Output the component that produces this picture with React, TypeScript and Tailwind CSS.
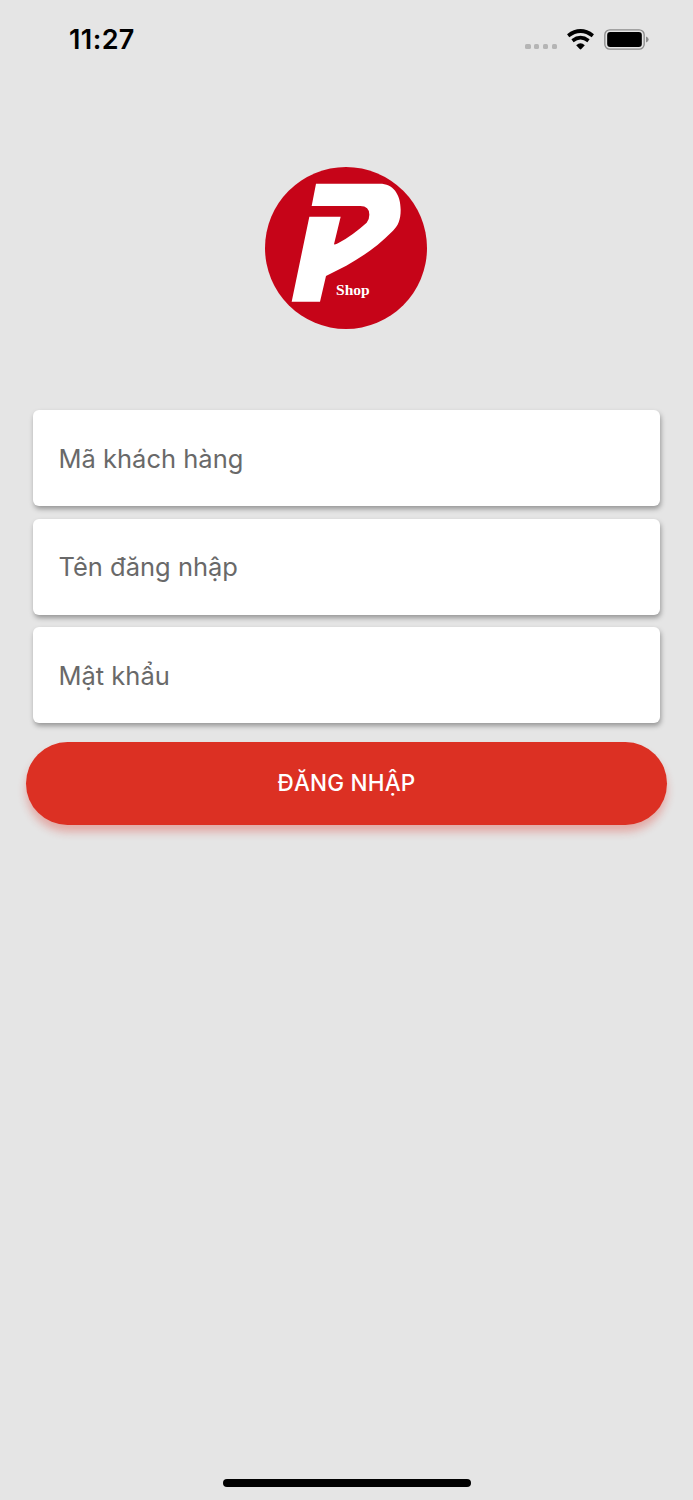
import React from "react";

interface FieldProps {
  placeholder: string;
  type?: string;
}

const StatusBar = () => {
  return (
    <div className="flex h-[80px] items-center justify-between pl-[69px] pr-[44px]">
      <span className="text-[27px] font-semibold leading-[30px] tracking-[0.4px] text-black">
        11:27
      </span>
      <div className="flex items-center">
        <div className="mt-[13px] flex gap-[3.4px]">
          <span className="size-[5.4px] rounded-[1.6px] bg-[#b5b5b5]" />
          <span className="size-[5.4px] rounded-[1.6px] bg-[#b5b5b5]" />
          <span className="size-[5.4px] rounded-[1.6px] bg-[#b5b5b5]" />
          <span className="size-[5.4px] rounded-[1.6px] bg-[#b5b5b5]" />
        </div>
        <svg className="mb-px ml-[10px] h-[21px] w-[27px]" viewBox="0 0 81 63" fill="none">
          <path d="M3.5 20Q40.5 -8 77.5 20" stroke="#000" strokeWidth="11" />
          <path d="M16.5 35Q40.5 17 64.5 35" stroke="#000" strokeWidth="11" />
          <path d="M27.5 48.5Q40.5 37 53.5 48.5L43 60Q40.5 62.5 38 60Z" fill="#000" />
        </svg>
        <svg className="mb-px ml-[10px] h-[21px] w-[45px]" viewBox="0 0 135 63" fill="none">
          <rect x="2.5" y="2.5" width="118" height="58" rx="15" stroke="#8c8c8c" strokeWidth="4" />
          <rect x="9.5" y="9" width="104" height="45" rx="9" fill="#000" />
          <path d="M126 22.5Q134 25 134 31.5T126 40.5Z" fill="#8c8c8c" />
        </svg>
      </div>
    </div>
  );
};

const Logo = () => {
  return (
    <svg className="size-[162px]" viewBox="28 27 486 486">
      <circle cx="271" cy="270" r="243" fill="#c60418" />
      <path
        d="M181 77H372C412 77 435 108 435 155C435 186 427 203 412 218C344 286 285 318 211 354L193 431H108L161 176H255L235 259Q241 260 247 256C277 239 307 218 333 194Q341 185 341 170Q341 144 314 144H168Z"
        fill="#fff"
      />
      <text
        x="241"
        y="411"
        fill="#fff"
        fontSize="45"
        fontWeight="700"
        fontFamily="'Liberation Serif', serif"
        textLength="101"
        lengthAdjust="spacingAndGlyphs"
      >
        Shop
      </text>
    </svg>
  );
};

const Field = ({ placeholder, type = "text" }: FieldProps) => {
  return (
    <input
      type={type}
      placeholder={placeholder}
      className="h-[96px] w-full rounded-[6px] bg-white px-[26px] text-[25.5px] tracking-normal text-black shadow-[1px_3px_5px_rgba(0,0,0,0.34)] outline-none placeholder:text-[#696969]"
    />
  );
};

const App = () => {
  return (
    <div className="flex h-[1500px] w-[693px] flex-col bg-[#e5e5e5] font-['Inter',sans-serif]">
      <StatusBar />
      <div className="mt-[87px] flex justify-center pr-px">
        <Logo />
      </div>
      <form className="mt-[81px] flex flex-col px-[26px]">
        <div className="flex flex-col gap-[12.5px] pl-[6.5px] pr-[7px]">
          <Field placeholder="Mã khách hàng" />
          <Field placeholder="Tên đăng nhập" />
          <Field placeholder="Mật khẩu" type="password" />
        </div>
        <button
          type="button"
          className="mt-[19px] h-[83px] rounded-full bg-[#dc3023] pb-px text-[22.5px] font-medium tracking-[0.2px] text-white shadow-[0_7px_9px_rgba(220,48,35,0.32)]"
        >
          ĐĂNG NHẬP
        </button>
      </form>
      <div className="mx-auto mb-[13px] mt-auto h-[8.5px] w-[248px] rounded-full bg-black" />
    </div>
  );
};

export default App;
